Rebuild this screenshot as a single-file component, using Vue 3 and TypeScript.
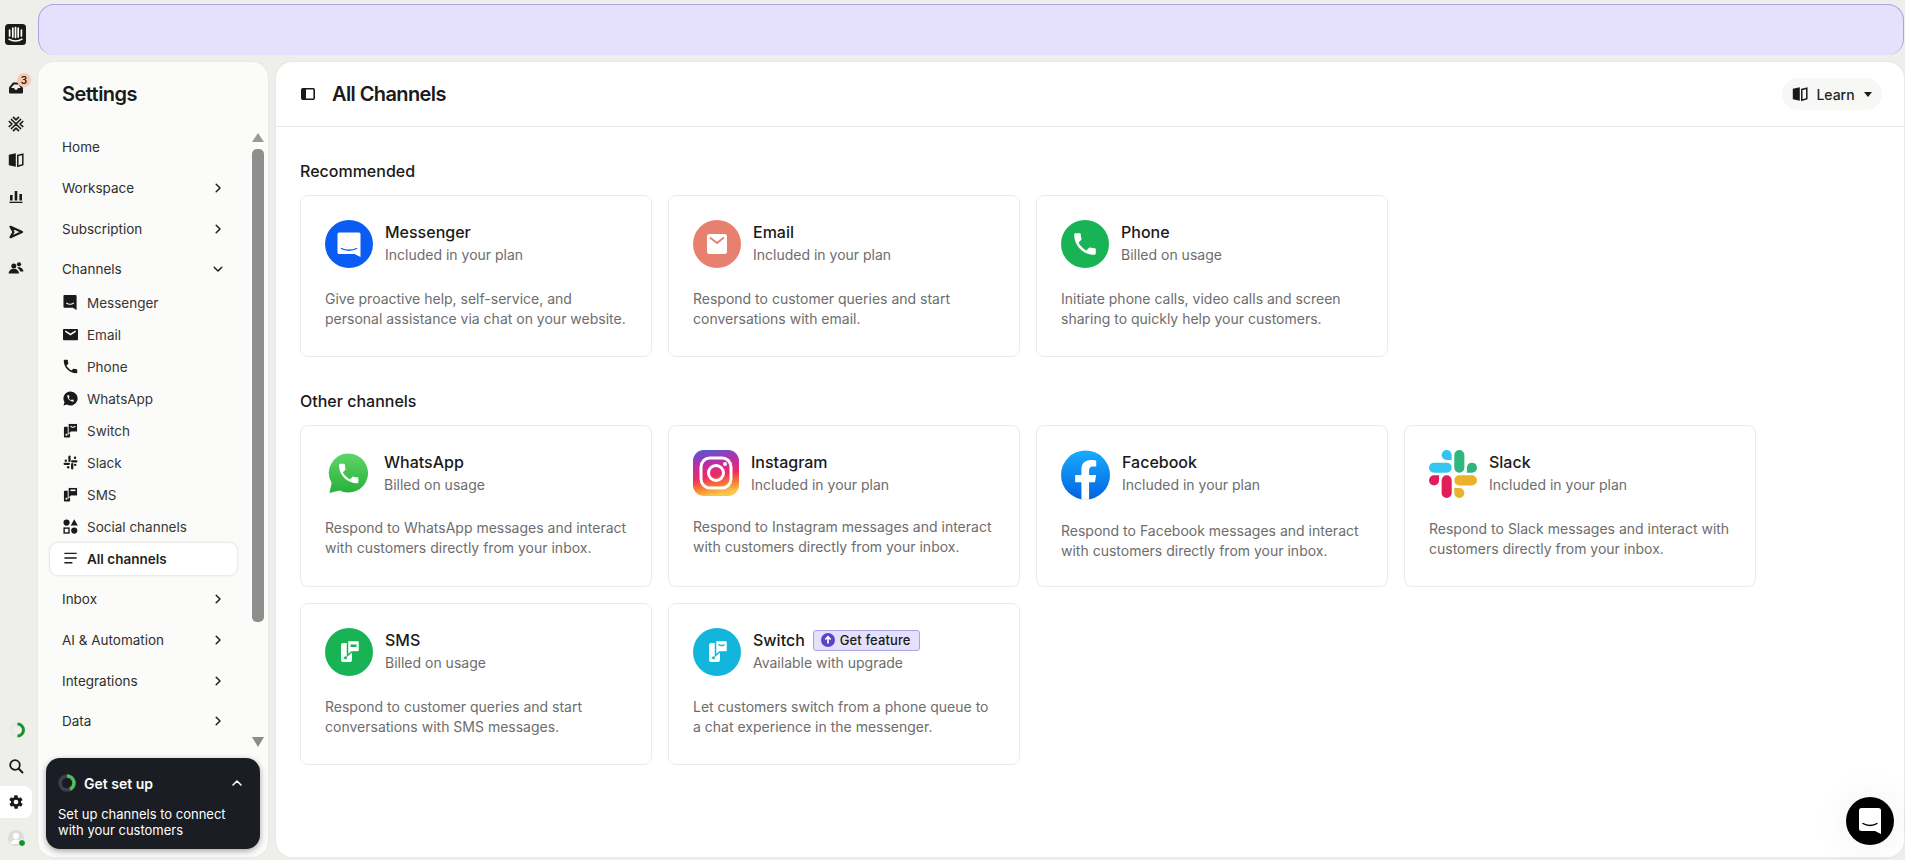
<template>
  <div class="shell">
    <!-- icon rail -->
    <aside class="rail">
      <svg class="logo" viewBox="0 0 21 21">
        <rect width="21" height="21" rx="3.5" fill="#1a1a1a" />
        <path d="M4.600 6v6M7.800 4v9M10.500 3.500v10M13.200 4v9M16.400 6v6" stroke="#fff" stroke-width="1.700" stroke-linecap="round" fill="none" />
        <path d="M4 15.200c3.600 2.400 9.400 2.400 13 0" stroke="#fff" stroke-width="1.500" stroke-linecap="round" fill="none" />
      </svg>
      <div class="rail-top">
        <div v-for="item in railTop" :key="item.key" class="rail-item">
          <svg class="rail-icon" viewBox="0 0 16 16" v-html="glyphs[item.key]" />
          <span v-if="item.badge" class="rail-badge">{{ item.badge }}</span>
        </div>
      </div>
      <div class="rail-bottom">
        <div class="rail-item">
          <svg class="rail-icon spinner" viewBox="0 0 16 16">
            <circle cx="8" cy="8" r="6" stroke="#e9e9e6" stroke-width="3" fill="none" />
            <path d="M8.500 2a6 6 0 0 1 0 12" stroke="#1d8f2c" stroke-width="3" fill="none" />
          </svg>
        </div>
        <div class="rail-item">
          <svg class="rail-icon" viewBox="0 0 16 16">
            <circle cx="7" cy="7" r="4.800" stroke="#1a1a1a" stroke-width="1.800" fill="none" />
            <path d="M10.500 10.500 14.500 14.500" stroke="#1a1a1a" stroke-width="1.900" stroke-linecap="round" />
          </svg>
        </div>
        <div class="rail-item active">
          <svg class="rail-icon" viewBox="0 0 24 24">
            <path fill="#1a1a1a" fill-rule="evenodd" d="M19.400 13a7.600 7.600 0 0 0 0-2l2.100-1.600a.5.5 0 0 0 .1-.6l-2-3.500a.5.5 0 0 0-.6-.2l-2.500 1a7.400 7.400 0 0 0-1.700-1l-.4-2.600a.5.5 0 0 0-.5-.5h-4a.5.5 0 0 0-.5.4l-.4 2.700a7.400 7.400 0 0 0-1.700 1l-2.500-1a.5.5 0 0 0-.6.2l-2 3.500a.5.5 0 0 0 .1.6L4.600 11a7.600 7.600 0 0 0 0 2l-2.100 1.600a.5.5 0 0 0-.1.6l2 3.500a.5.5 0 0 0 .6.2l2.500-1a7.400 7.400 0 0 0 1.700 1l.4 2.600a.5.5 0 0 0 .5.5h4a.5.5 0 0 0 .5-.4l.4-2.700a7.400 7.400 0 0 0 1.700-1l2.500 1a.5.5 0 0 0 .6-.2l2-3.500a.5.5 0 0 0-.1-.6zM12 15.500a3.500 3.500 0 1 1 0-7 3.500 3.500 0 0 1 0 7z" />
          </svg>
        </div>
        <div class="rail-item">
          <span class="avatar">
            <svg viewBox="0 0 16 16">
              <circle cx="8" cy="8" r="8" fill="#dcdcd9" />
              <circle cx="8" cy="6" r="3" fill="#fff" />
              <path d="M2.500 14c.6-3 2.800-4.500 5.500-4.500s4.900 1.500 5.500 4.500z" fill="#fff" />
            </svg>
            <i class="presence" />
          </span>
        </div>
      </div>
    </aside>

    <div class="workspace">
      <div class="banner" />
      <div class="panels">
        <!-- settings sidebar -->
        <nav class="sidebar">
          <h2 class="side-title">Settings</h2>
          <div class="side-body">
            <div class="nav">
              <template v-for="section in sections" :key="section.label">
                <div class="nav-row">
                  <span>{{ section.label }}</span>
                  <svg v-if="section.chevron" class="chev" :class="{ down: section.items }" viewBox="0 0 10 10">
                    <path d="M3.200 1.200 7 5 3.200 8.800" stroke="#1f1f1f" stroke-width="1.500" fill="none" stroke-linecap="round" stroke-linejoin="round" />
                  </svg>
                </div>
                <div v-if="section.items" class="nav-children">
                  <div v-for="child in section.items" :key="child.label" class="nav-child" :class="{ current: child.current }">
                    <svg class="child-icon" :viewBox="child.box ?? '0 0 16 16'" v-html="glyphs[child.icon]" />
                    <span>{{ child.label }}</span>
                  </div>
                </div>
              </template>
            </div>
            <div class="scrollbar">
              <i class="arrow up" />
              <i class="thumb" />
              <i class="arrow dn" />
            </div>
          </div>
          <div class="setup">
            <div class="setup-head">
              <svg class="setup-ring" viewBox="0 0 18 18">
                <circle cx="9" cy="9" r="7" stroke="#3d4048" stroke-width="3.500" fill="none" />
                <path d="M9 2a7 7 0 0 1 3 13.300" stroke="#4cc05a" stroke-width="3.500" fill="none" />
              </svg>
              <strong>Get set up</strong>
              <svg class="setup-chev" viewBox="0 0 12 12">
                <path d="M2 8 6 4l4 4" stroke="#fff" stroke-width="1.500" fill="none" stroke-linecap="round" stroke-linejoin="round" />
              </svg>
            </div>
            <p>Set up channels to connect with your customers</p>
          </div>
        </nav>

        <!-- main panel -->
        <main class="main">
          <header class="main-head">
            <svg class="panel-icon" viewBox="0 0 14 12">
              <rect x=".8" y=".8" width="12.400" height="10.400" rx="1" fill="none" stroke="#1a1a1a" stroke-width="1.600" />
              <rect x="1" y="1" width="4" height="10" fill="#1a1a1a" />
            </svg>
            <h1>All Channels</h1>
            <button class="learn">
              <svg viewBox="0 0 16 16" v-html="glyphs.book" />
              <span>Learn</span>
              <i class="caret" />
            </button>
          </header>

          <div class="content">
            <section v-for="group in groups" :key="group.title" class="group">
              <h3>{{ group.title }}</h3>
              <div class="grid">
                <article v-for="c in group.cards" :key="c.name" class="card">
                  <div class="card-top">
                    <svg class="logo-icon" :class="c.icon" :viewBox="c.box" v-html="logos[c.icon]" />
                    <div class="card-title">
                      <div class="name-line">
                        <span class="name">{{ c.name }}</span>
                        <span v-if="c.upgrade" class="feature">
                          <svg viewBox="0 0 14 14">
                            <circle cx="7" cy="7" r="7" fill="#5b43c9" />
                            <path d="M7 10.500V4M4.300 6.500 7 3.700l2.700 2.800" stroke="#fff" stroke-width="1.700" fill="none" />
                          </svg>
                          Get feature
                        </span>
                      </div>
                      <div class="sub">{{ c.sub }}</div>
                    </div>
                  </div>
                  <p class="desc">{{ c.desc }}</p>
                </article>
              </div>
            </section>
          </div>

          <div class="launcher">
            <svg viewBox="0 0 22 26">
              <path d="M2.500 0h17A2.500 2.500 0 0 1 22 2.500V26l-6-3H2.500A2.500 2.500 0 0 1 0 20.500v-18A2.500 2.500 0 0 1 2.500 0z" fill="#fff" />
              <path d="M4 15.500c3.800 2.600 10.200 2.600 14 0" stroke="#000" stroke-width="1.400" fill="none" stroke-linecap="round" />
            </svg>
          </div>
        </main>
      </div>
    </div>
  </div>
</template>

<script setup lang="ts">
interface NavChild {
  label: string;
  icon: string;
  box?: string;
  current?: boolean;
}

interface NavSection {
  label: string;
  chevron: boolean;
  items?: NavChild[];
}

interface Channel {
  name: string;
  sub: string;
  desc: string;
  icon: string;
  box: string;
  upgrade?: boolean;
}

const phone24 =
  'M6.620 10.790c1.440 2.830 3.760 5.140 6.590 6.590l2.200-2.200c.27-.27.67-.36 1.020-.24 1.120.37 2.330.57 3.570.57.55 0 1 .45 1 1V20c0 .55-.45 1-1 1-9.390 0-17-7.610-17-17 0-.55.45-1 1-1h3.500c.55 0 1 .45 1 1 0 1.250.2 2.450.57 3.570.11.35.03.74-.25 1.020l-2.200 2.200z';

const ink = '#1a1a1a';

// phone handset with a speech bubble over its corner, 48 grid
const handsetLogo = (bg: string, mark: string) =>
  `<circle cx="24" cy="24" r="24" fill="${bg}"/>` +
  `<rect x="16" y="15" width="11" height="19" rx="2" fill="#fff"/>` +
  `<circle cx="20.500" cy="29.700" r="1.500" fill="${bg}"/>` +
  `<path fill="#fff" stroke="${bg}" stroke-width="1.500" d="M22 12.500h11a1.500 1.500 0 0 1 1.500 1.500v8.500a1.500 1.500 0 0 1-1.500 1.500h-6.500l-4 3.500V14a1.500 1.500 0 0 1-.5-1.500z"/>` +
  mark;

// same idea for the small nav icons, 16 grid
const handsetGlyph = (mark: string) =>
  `<rect x="1" y="4" width="6.500" height="11.500" rx="1" fill="${ink}"/>` +
  `<rect x="2.700" y="11.500" width="2" height="2" fill="#fbfbf9"/>` +
  `<path fill="${ink}" stroke="#fbfbf9" stroke-width="1" d="M5.500 .5h10v9h-7l-3 2.500z"/>` +
  mark;

// monochrome glyphs, rail and sub nav
const glyphs: Record<string, string> = {
  inbox: `<path fill="${ink}" fill-rule="evenodd" d="M5 2.500h6.500L15 8v4.500a1 1 0 0 1-1 1H2a1 1 0 0 1-1-1V7.500zM3 8h3l1 1.800h2L10 8h2.600l-1.900-3.500H6z"/>`,
  fin: `<path stroke="${ink}" stroke-width="1.700" fill="none" d="M3 3l10 10M13 3 3 13M5 .8l3 3 3-3M5 15.200l3-3 3 3M.8 5l3 3-3 3M15.200 5l-3 3 3 3"/>`,
  book: `<path fill="${ink}" d="M.8 2.800 7.800 1.200v13.600L.8 13.200z"/><path fill="none" stroke="${ink}" stroke-width="1.500" d="M9.800 3.400 14.800 2.200v10.600l-5 1.400z"/>`,
  chart: `<g fill="${ink}"><rect x="2" y="7" width="2.600" height="5.500"/><rect x="6.700" y="3" width="2.600" height="9.500"/><rect x="11.400" y="6" width="2.600" height="6.500"/><rect x="1.500" y="13.700" width="13" height="1.300"/></g>`,
  send: `<path fill="none" stroke="${ink}" stroke-width="2.200" stroke-linejoin="round" d="M2.500 2.800 14 8 2.500 13.200 5.500 8z"/>`,
  people: `<g fill="${ink}"><circle cx="5.800" cy="6" r="2.500"/><circle cx="11" cy="4.300" r="2.100"/><path d="M.5 13.500c.4-3 2.500-4.700 5.300-4.700s4.900 1.700 5.300 4.700z"/><path d="M9.400 7.600c.5-.2 1-.3 1.600-.3 2.500 0 4.200 1.600 4.500 4.200h-3.300c-.5-1.500-1.500-2.700-2.800-3.400z"/></g>`,
  messenger: `<path fill="${ink}" d="M1.500 0h12a1 1 0 0 1 1 1v15l-4-2.500H1.500a1 1 0 0 1-1-1V1a1 1 0 0 1 1-1z"/><path d="M3.500 8.500c2.200 1.500 5.800 1.500 8 0" stroke="#fbfbf9" stroke-width="1.200" fill="none"/>`,
  email: `<path fill="${ink}" d="M1 2h14a1 1 0 0 1 1 1v10a1 1 0 0 1-1 1H1a1 1 0 0 1-1-1V3a1 1 0 0 1 1-1z"/><path d="M2.500 4.500 8 8l5.500-3.500" stroke="#fbfbf9" stroke-width="1.600" fill="none"/>`,
  phone: `<path fill="${ink}" d="${phone24}"/>`,
  whatsapp: `<path fill="${ink}" d="M8 .5a7.500 7.500 0 0 0-6.400 11.400L.5 15.500l3.700-1.100A7.500 7.500 0 1 0 8 .5z"/><path fill="#fbfbf9" transform="translate(3.400 3.400) scale(.38)" d="${phone24}"/>`,
  switch: handsetGlyph(`<path d="M8 3.500c1.500 1.200 3.800 1.200 5.300 0" stroke="#fbfbf9" stroke-width="1.200" fill="none"/>`),
  sms: handsetGlyph(`<rect x="8" y="2.700" width="5.300" height="1.700" fill="#fbfbf9"/>`),
  slack: `<g fill="${ink}"><rect x="5.700" y=".5" width="2.400" height="7" rx="1.200"/><rect x=".5" y="8.200" width="7" height="2.400" rx="1.200"/><rect x="8.600" y="8.500" width="2.400" height="7" rx="1.200"/><rect x="8.500" y="5.500" width="7" height="2.400" rx="1.200"/><circle cx="3" cy="6" r="1.300"/><circle cx="12.800" cy="3" r="1.300"/><circle cx="13" cy="10.500" r="1.300"/><circle cx="5.500" cy="13" r="1.300"/></g>`,
  social: `<g fill="${ink}"><circle cx="3.800" cy="3.800" r="3.300"/><path d="M12 .3 15.800 7H8.200z"/><rect x="1.200" y="9.700" width="5.200" height="5.200" fill="none" stroke="${ink}" stroke-width="1.500"/><circle cx="12" cy="12.300" r="3.300"/></g>`,
  lines: `<path stroke="${ink}" stroke-width="1.500" fill="none" d="M1.500 2.500h13M1.500 7.500h13M1.500 12.500h8.500"/>`,
};

const brandSlack = [
  ['#e01e5a', 'M5.042 15.165a2.528 2.528 0 0 1-2.52 2.523A2.528 2.528 0 0 1 0 15.165a2.527 2.527 0 0 1 2.522-2.52h2.52v2.52zM6.313 15.165a2.527 2.527 0 0 1 2.521-2.52 2.527 2.527 0 0 1 2.521 2.52v6.313A2.528 2.528 0 0 1 8.834 24a2.528 2.528 0 0 1-2.521-2.522v-6.313z'],
  ['#36c5f0', 'M8.834 5.042a2.528 2.528 0 0 1-2.521-2.52A2.528 2.528 0 0 1 8.834 0a2.528 2.528 0 0 1 2.521 2.522v2.52H8.834zM8.834 6.313a2.528 2.528 0 0 1 2.521 2.521 2.528 2.528 0 0 1-2.521 2.521H2.522A2.528 2.528 0 0 1 0 8.834a2.528 2.528 0 0 1 2.522-2.521h6.312z'],
  ['#2eb67d', 'M18.956 8.834a2.528 2.528 0 0 1 2.522-2.521A2.528 2.528 0 0 1 24 8.834a2.528 2.528 0 0 1-2.522 2.521h-2.522V8.834zM17.688 8.834a2.528 2.528 0 0 1-2.523 2.521 2.527 2.527 0 0 1-2.52-2.521V2.522A2.527 2.527 0 0 1 15.165 0a2.528 2.528 0 0 1 2.523 2.522v6.312z'],
  ['#ecb22e', 'M15.165 18.956a2.528 2.528 0 0 1 2.523 2.522A2.528 2.528 0 0 1 15.165 24a2.527 2.527 0 0 1-2.52-2.522v-2.522h2.52zM15.165 17.688a2.527 2.527 0 0 1-2.52-2.523 2.526 2.526 0 0 1 2.52-2.52h6.313A2.527 2.527 0 0 1 24 15.165a2.528 2.528 0 0 1-2.522 2.523h-6.313z'],
]
  .map(([fill, d]) => `<path fill="${fill}" d="${d}"/>`)
  .join('');

const logos: Record<string, string> = {
  messenger: `<circle cx="24" cy="24" r="24" fill="#0a5cf5"/><path fill="#fff" d="M14 12.500h20a1.500 1.500 0 0 1 1.500 1.500v23l-6-3H14a1.500 1.500 0 0 1-1.500-1.500V14a1.500 1.500 0 0 1 1.500-1.500z"/><path d="M16.500 28.500c4 2.300 11 2.300 15 0" stroke="#0a5cf5" stroke-width="1.400" fill="none" stroke-linecap="round"/>`,
  email: `<circle cx="24" cy="24" r="24" fill="#e8806f"/><rect x="14" y="14" width="20" height="20" rx="2.500" fill="#fff"/><path d="M17 17.500l7 5.500 7-5.500" stroke="#e8806f" stroke-width="1.800" fill="none"/>`,
  phone: `<circle cx="24" cy="24" r="24" fill="#17b355"/><path fill="#fff" transform="translate(9.600 9.600) scale(1.200)" d="${phone24}"/>`,
  whatsapp: `<defs><linearGradient id="wa" x1="0" y1="0" x2="0" y2="1"><stop offset="0" stop-color="#5fd568"/><stop offset="1" stop-color="#27b13a"/></linearGradient></defs><path fill="#fff" d="M24 1.500A22 22 0 0 0 5 35l-3.500 12 12.500-3.300A22 22 0 1 0 24 1.500z"/><path fill="url(#wa)" d="M24 3.500A20 20 0 0 0 6.800 33.700L4.500 44l10.300-2.700A20 20 0 1 0 24 3.500z"/><path fill="#fff" transform="translate(11 10.800) scale(1.100)" d="${phone24}"/>`,
  instagram: `<defs><linearGradient id="ig" x1=".15" y1="0" x2=".35" y2="1"><stop offset="0" stop-color="#4f5bd5"/><stop offset=".3" stop-color="#b72fa8"/><stop offset=".6" stop-color="#ee2a64"/><stop offset=".82" stop-color="#f97f2e"/><stop offset="1" stop-color="#fdc64d"/></linearGradient></defs><rect width="46" height="46" rx="11" fill="url(#ig)"/><rect x="8" y="8" width="30" height="30" rx="9" fill="none" stroke="#fff" stroke-width="3"/><circle cx="23" cy="23" r="7.500" fill="none" stroke="#fff" stroke-width="3"/><circle cx="32" cy="14" r="2" fill="#fff"/>`,
  facebook: `<defs><linearGradient id="fb" x1="0" y1="0" x2="0" y2="1"><stop offset="0" stop-color="#18acfe"/><stop offset="1" stop-color="#0163e0"/></linearGradient></defs><circle cx="24" cy="24" r="24" fill="url(#fb)"/><path fill="#fff" d="M33.300 31l1.100-7h-6.900v-4.500c0-1.900.9-3.800 4-3.800h3v-6s-2.800-.5-5.400-.5c-5.500 0-9.100 3.400-9.100 9.400V24h-6.100v7H20v17c1.200.2 2.500.3 3.800.3s2.500-.1 3.700-.3V31z"/>`,
  slack: brandSlack,
  sms: handsetLogo('#17b355', `<rect x="25.500" y="16.500" width="6" height="2.500" fill="#17b355"/>`),
  switch: handsetLogo('#12b5dc', `<path d="M25.500 16.500c1.500 1.400 4.500 1.400 6 0" stroke="#12b5dc" stroke-width="1.500" fill="none"/>`),
};

const railTop = [
  { key: 'inbox', badge: '3' },
  { key: 'fin' },
  { key: 'book' },
  { key: 'chart' },
  { key: 'send' },
  { key: 'people' },
];

const sections: NavSection[] = [
  { label: 'Home', chevron: false },
  { label: 'Workspace', chevron: true },
  { label: 'Subscription', chevron: true },
  {
    label: 'Channels',
    chevron: true,
    items: [
      { label: 'Messenger', icon: 'messenger' },
      { label: 'Email', icon: 'email' },
      { label: 'Phone', icon: 'phone', box: '2 2 20 20' },
      { label: 'WhatsApp', icon: 'whatsapp' },
      { label: 'Switch', icon: 'switch' },
      { label: 'Slack', icon: 'slack' },
      { label: 'SMS', icon: 'sms' },
      { label: 'Social channels', icon: 'social' },
      { label: 'All channels', icon: 'lines', current: true },
    ],
  },
  { label: 'Inbox', chevron: true },
  { label: 'AI & Automation', chevron: true },
  { label: 'Integrations', chevron: true },
  { label: 'Data', chevron: true },
];

const groups: { title: string; cards: Channel[] }[] = [
  {
    title: 'Recommended',
    cards: [
      { name: 'Messenger', sub: 'Included in your plan', desc: 'Give proactive help, self-service, and personal assistance via chat on your website.', icon: 'messenger', box: '0 0 48 48' },
      { name: 'Email', sub: 'Included in your plan', desc: 'Respond to customer queries and start conversations with email.', icon: 'email', box: '0 0 48 48' },
      { name: 'Phone', sub: 'Billed on usage', desc: 'Initiate phone calls, video calls and screen sharing to quickly help your customers.', icon: 'phone', box: '0 0 48 48' },
    ],
  },
  {
    title: 'Other channels',
    cards: [
      { name: 'WhatsApp', sub: 'Billed on usage', desc: 'Respond to WhatsApp messages and interact with customers directly from your inbox.', icon: 'whatsapp', box: '0 0 48 48' },
      { name: 'Instagram', sub: 'Included in your plan', desc: 'Respond to Instagram messages and interact with customers directly from your inbox.', icon: 'instagram', box: '0 0 46 46' },
      { name: 'Facebook', sub: 'Included in your plan', desc: 'Respond to Facebook messages and interact with customers directly from your inbox.', icon: 'facebook', box: '0 0 48 48' },
      { name: 'Slack', sub: 'Included in your plan', desc: 'Respond to Slack messages and interact with customers directly from your inbox.', icon: 'slack', box: '0 0 24 24' },
      { name: 'SMS', sub: 'Billed on usage', desc: 'Respond to customer queries and start conversations with SMS messages.', icon: 'sms', box: '0 0 48 48' },
      { name: 'Switch', sub: 'Available with upgrade', desc: 'Let customers switch from a phone queue to a chat experience in the messenger.', icon: 'switch', box: '0 0 48 48', upgrade: true },
    ],
  },
];
</script>

<style>
html,
body {
  margin: 0;
  background: #eeeeea;
  overflow: hidden;
}
</style>

<style scoped>
.shell {
  display: flex;
  height: 860px;
  font-family: Inter, 'Liberation Sans', sans-serif;
  color: #1a1a1a;
}

/* rail */
.rail {
  width: 38px;
  flex: none;
  display: flex;
  flex-direction: column;
  padding: 24px 0 4px;
  box-sizing: border-box;
}
.logo {
  width: 21px;
  height: 21px;
  margin-left: 5px;
  flex: none;
}
.rail-top {
  margin-top: 25px;
}
.rail-bottom {
  margin-top: auto;
}
.rail-item {
  position: relative;
  width: 32px;
  height: 36px;
  display: flex;
  align-items: center;
  justify-content: center;
}
.rail-item.active {
  height: 32px;
  margin: 2px 0;
  background: #fff;
  border-radius: 0 8px 8px 0;
}
.rail-icon {
  width: 16px;
  height: 16px;
}
.spinner {
  margin-right: -1px;
}
.rail-badge {
  position: absolute;
  top: 3px;
  left: 17px;
  width: 14px;
  height: 14px;
  border-radius: 50%;
  background: #fbc9ae;
  font-size: 10px;
  font-weight: 600;
  line-height: 14px;
  text-align: center;
}
.avatar {
  position: relative;
  width: 16px;
  height: 16px;
}
.avatar svg {
  display: block;
}
.presence {
  position: absolute;
  right: -2px;
  bottom: -1px;
  width: 6px;
  height: 6px;
  border-radius: 50%;
  background: #16902a;
  border: 1px solid #fff;
}

/* right side */
.workspace {
  flex: 1;
  min-width: 0;
  display: flex;
  flex-direction: column;
}
.banner {
  height: 51px;
  flex: none;
  margin: 4px 1px 7px 0;
  box-sizing: border-box;
  background: #e5e1fd;
  border: 1px solid #a9a2e3;
  border-bottom: 0;
  border-radius: 16px;
}
.panels {
  flex: 1;
  display: flex;
  gap: 8px;
  margin: 0 1px 3px 0;
  min-height: 0;
}

/* sidebar */
.sidebar {
  width: 230px;
  flex: none;
  display: flex;
  flex-direction: column;
  background: #fbfbf9;
  border-radius: 16px;
  box-shadow: 0 0 2px rgba(0, 0, 0, 0.08);
}
.side-title {
  margin: 0;
  height: 64px;
  flex: none;
  padding-left: 24px;
  font-size: 20px;
  font-weight: 600;
  line-height: 64px;
  letter-spacing: -0.55px;
}
.side-body {
  height: 624px;
  flex: none;
  display: flex;
}
.nav {
  width: 187px;
  margin-left: 12px;
  padding-top: 1px;
}
.nav-row {
  height: 40.67px;
  display: flex;
  align-items: center;
  justify-content: space-between;
  padding: 0 13px 0 12px;
  font-size: 13.500px;
  color: #2f2f2f;
}
.chev {
  width: 10px;
  height: 10px;
  margin-right: 1px;
}
.chev.down {
  transform: rotate(90deg);
}
.nav-children {
  margin: -3px 0 4.500px;
}
.nav-child {
  height: 32px;
  box-sizing: border-box;
  display: flex;
  align-items: center;
  gap: 9px;
  padding-left: 13px;
  font-size: 13.500px;
  color: #363636;
  border-radius: 8px;
}
.nav-child.current {
  background: #fff;
  font-weight: 600;
  color: #1f1f1f;
  box-shadow: 0 0 3px rgba(0, 0, 0, 0.18);
}
.child-icon {
  width: 15px;
  height: 15px;
  flex: none;
}
.scrollbar {
  width: 12px;
  margin-left: 15px;
  padding: 7px 0 3px;
  box-sizing: border-box;
  display: flex;
  flex-direction: column;
  align-items: center;
}
.arrow {
  width: 0;
  height: 0;
  border-left: 6px solid transparent;
  border-right: 6px solid transparent;
}
.arrow.up {
  border-bottom: 9px solid #9a9a9a;
}
.arrow.dn {
  margin-top: auto;
  border-top: 10px solid #8c8c8c;
}
.thumb {
  width: 12px;
  height: 473px;
  margin-top: 7px;
  background: #8e8e8e;
  border-radius: 5px;
}
.setup {
  margin: 8px 8px 0;
  height: 91px;
  box-sizing: border-box;
  padding: 16px 12px 0;
  background: #1a1d24;
  border-radius: 14px;
  color: #fff;
  box-shadow: 0 2px 6px rgba(0, 0, 0, 0.35);
}
.setup-head {
  display: flex;
  align-items: center;
  gap: 8px;
  height: 18px;
}
.setup-head strong {
  font-size: 14px;
  font-weight: 600;
}
.setup-ring {
  width: 18px;
  height: 18px;
}
.setup-chev {
  width: 12px;
  height: 12px;
  margin: 0 5px 0 auto;
}
.setup p {
  margin: 14px 0 0;
  font-size: 13px;
  line-height: 16px;
}

/* main */
.main {
  position: relative;
  flex: 1;
  min-width: 0;
  background: #fff;
  border-radius: 16px;
  box-shadow: 0 0 2px rgba(0, 0, 0, 0.1);
}
.main-head {
  height: 64px;
  display: flex;
  align-items: center;
  padding: 0 22px 0 25px;
  border-bottom: 1px solid #e9e9e7;
}
.panel-icon {
  width: 14px;
  height: 12px;
}
.main-head h1 {
  margin: 0 0 0 17px;
  font-size: 20px;
  font-weight: 600;
  letter-spacing: -0.6px;
}
.learn {
  margin-left: auto;
  width: 100px;
  height: 32px;
  display: flex;
  align-items: center;
  justify-content: center;
  gap: 8px;
  border: 0;
  border-radius: 16px;
  background: #f7f7f5;
  font: 500 14px Inter, 'Liberation Sans', sans-serif;
  color: #1f1f1f;
}
.learn svg {
  width: 16px;
  height: 16px;
}
.caret {
  width: 0;
  height: 0;
  margin-left: 1px;
  border-left: 4px solid transparent;
  border-right: 4px solid transparent;
  border-top: 5px solid #1a1a1a;
}
.content {
  padding: 32px 24px 0;
}
.group + .group {
  margin-top: 32px;
}
.group h3 {
  margin: 0 0 12px;
  font-size: 16px;
  font-weight: 550;
  line-height: 24px;
}
.grid {
  display: grid;
  grid-template-columns: repeat(4, 352px);
  grid-auto-rows: 162px;
  gap: 16px;
}
.card {
  box-sizing: border-box;
  padding: 24px;
  border: 1px solid #ebebe9;
  border-radius: 8px;
}
.card-top {
  display: flex;
  gap: 12px;
  align-items: flex-start;
}
.logo-icon {
  width: 48px;
  height: 48px;
  flex: none;
}
.logo-icon.instagram {
  width: 46px;
  height: 46px;
}
.logo-icon.whatsapp {
  width: 47px;
  height: 47px;
}
.logo-icon.facebook {
  width: 49px;
  height: 50px;
}
.card-title {
  padding-top: 1px;
}
.name-line {
  display: flex;
  align-items: center;
  gap: 8px;
  height: 22px;
}
.name {
  font-size: 16px;
  font-weight: 450;
}
.sub {
  margin-top: 1.500px;
  font-size: 14px;
  line-height: 20px;
  color: #6d6d6d;
}
.feature {
  display: inline-flex;
  align-items: center;
  gap: 5px;
  height: 21px;
  box-sizing: border-box;
  padding: 0 8px 0 7px;
  background: #e5e1fd;
  border: 1px solid #a9a2e3;
  border-radius: 3px;
  font-size: 13px;
  font-weight: 500;
  letter-spacing: 0.1px;
}
.feature svg {
  width: 14px;
  height: 14px;
}
.desc {
  margin: 21px 0 0;
  font-size: 14px;
  line-height: 20px;
  color: #6d6d6d;
}
.launcher {
  position: absolute;
  right: 10px;
  bottom: 12px;
  width: 48px;
  height: 48px;
  display: flex;
  align-items: center;
  justify-content: center;
  background: #000;
  border-radius: 50%;
  box-shadow: 0 0 40px rgba(0, 0, 0, 0.07);
}
.launcher svg {
  width: 22px;
  height: 26px;
}
</style>
